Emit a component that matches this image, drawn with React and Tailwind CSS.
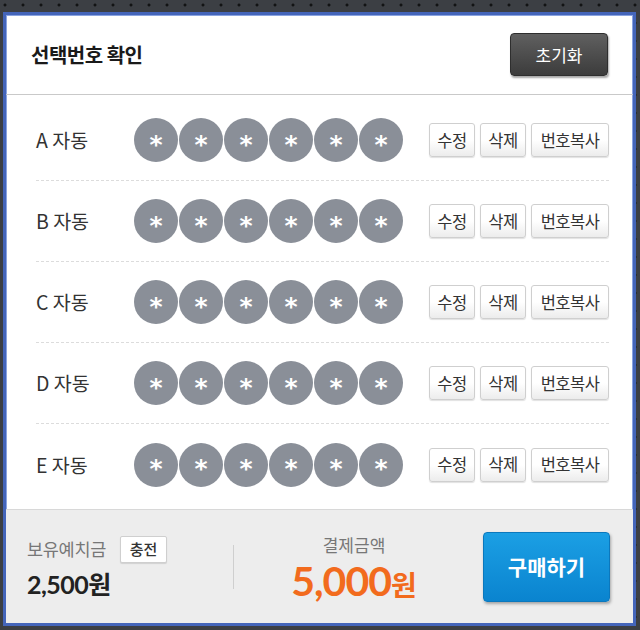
import React from "react";

const KR = { fontFamily: '"Noto Sans CJK KR", "Noto Sans", sans-serif' };
const NUM = { fontFamily: 'Lato, "Noto Sans CJK KR", sans-serif' };

function Ball() {
  return (
    <div className="w-[44px] h-[44px] rounded-full bg-[#8a8f98] flex items-center justify-center">
      <span className="text-white text-[25px] font-bold leading-none mt-[8px]" style={{ fontFamily: '"DejaVu Sans", sans-serif' }}>*</span>
    </div>
  );
}

function SmallBtn({ children, w }) {
  return (
    <div
      className={`${w} h-[34px] flex items-center justify-center rounded-[3px] border border-[#cfcfcf] bg-gradient-to-b from-white from-50% to-[#ececec] text-[16.5px] tracking-[-0.5px] text-[#333] shadow-[0_1px_1px_rgba(0,0,0,0.12)]`}
    >
      {children}
    </div>
  );
}

function Row({ letter, last }) {
  return (
    <div className={`h-[81px] flex items-center ml-[30px] mr-[24px] ${last ? "" : "border-b border-dashed border-[#dcdcdc]"}`}>
      <div className="w-[98px] text-[19.5px] text-[#333]">{letter} 자동</div>
      <div className="flex gap-[1px]">
        {[0, 1, 2, 3, 4, 5].map((i) => (
          <Ball key={i} />
        ))}
      </div>
      <div className="ml-auto flex gap-[5px]">
        <SmallBtn w="w-[46px]">수정</SmallBtn>
        <SmallBtn w="w-[46px]">삭제</SmallBtn>
        <SmallBtn w="w-[78px]">번호복사</SmallBtn>
      </div>
    </div>
  );
}

export default function App() {
  return (
    <div
      className="w-[640px] h-[630px] bg-[#3c3f44] pt-[12px] pl-[3px] pr-[4px] pb-[4px] bg-[radial-gradient(circle,#121314_1.2px,transparent_1.8px)] bg-[length:18px_18px] bg-[position:-4px_-4px]"
      style={KR}
    >
      <div className="h-full border-[3px] border-[#4465ba] bg-white flex flex-col shadow-[inset_0_0_0_1px_#8aa3e0]">
        <div className="h-[80px] shrink-0 flex items-center pl-[25px] pr-[25px] border-b border-[#c9c9c9]">
          <div className="text-[20px] font-bold text-[#1a1a1a] tracking-[-0.5px]">선택번호 확인</div>
          <div className="ml-auto w-[98px] h-[43px] rounded-[4px] bg-gradient-to-b from-[#606060] to-[#3c3c3c] border border-[#2e2e2e] flex items-center justify-center text-white text-[17px] shadow-[1px_2px_2px_rgba(0,0,0,0.35)]">
            초기화
          </div>
        </div>
        <div className="flex-1 pt-[5px]">
          {["A", "B", "C", "D", "E"].map((l, i) => (
            <Row key={l} letter={l} last={i === 4} />
          ))}
        </div>
        <div className="h-[114px] shrink-0 bg-[#ededed] border-t border-[#d8d8d8] flex items-center pl-[21px] pr-[23px]">
          <div className="w-[200px] flex flex-col">
            <div className="flex items-center gap-[14px]">
              <span className="text-[17.5px] text-[#777] tracking-[-0.3px]">보유예치금</span>
              <span className="h-[27px] w-[47px] justify-center flex items-center bg-white border border-[#cfcfcf] rounded-[2px] text-[15px] font-medium text-[#333] shadow-[0_1px_1px_rgba(0,0,0,0.12)]">충전</span>
            </div>
            <div className="mt-[8px] text-[25px] font-bold text-[#222] leading-none tracking-[-0.5px]" style={NUM}>
              2,500<span style={KR}>원</span>
            </div>
          </div>
          <div className="w-px h-[44px] bg-[#cfcfcf] ml-[6px]" />
          <div className="w-[240px] flex flex-col items-center">
            <div className="text-[17px] text-[#777]">결제금액</div>
            <div className="mt-[2px] text-[#f26b1d] font-bold leading-none flex items-baseline">
              <span className="text-[41px] tracking-[-1px]" style={NUM}>5,000</span>
              <span className="text-[28px]" style={KR}>원</span>
            </div>
          </div>
          <div className="ml-auto w-[127px] h-[70px] rounded-[4px] bg-gradient-to-b from-[#1b9fe4] to-[#0a84cf] border border-[#0b78bd] flex items-center justify-center text-white text-[21px] font-bold shadow-[1px_2px_3px_rgba(0,0,0,0.3)]">
            구매하기
          </div>
        </div>
      </div>
    </div>
  );
}
